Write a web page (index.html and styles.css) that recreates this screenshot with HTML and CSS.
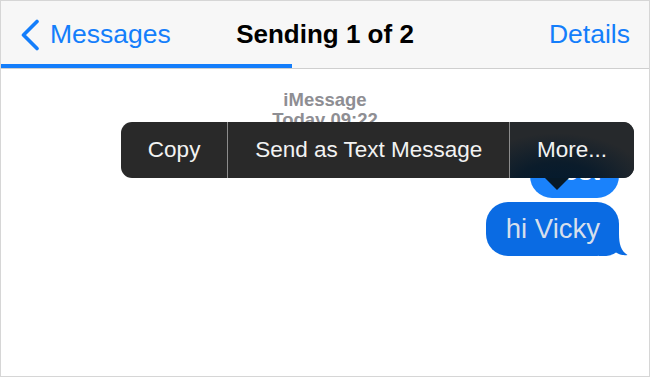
FILE: index.html
```html
<!DOCTYPE html>
<html>
<head>
<meta charset="utf-8">
<link rel="stylesheet" href="styles.css">
</head>
<body>
<div class="screen">
  <header class="navbar">
    <a class="back">
      <svg class="chevron" width="20" height="32" viewBox="0 0 20 32"><polyline points="17,2.5 3.5,16 17,29.5" fill="none" stroke="#147efb" stroke-width="3.6" stroke-linecap="round" stroke-linejoin="round"/></svg>
      <span>Messages</span>
    </a>
    <div class="title">Sending 1 of 2</div>
    <a class="details">Details</a>
  </header>
  <div class="progress"><div class="progress-fill"></div></div>
  <main class="thread">
    <div class="meta">iMessage<br>Today 09:22</div>
    <div class="bubble bubble-test">Test</div>
    <div class="bubble bubble-main">hi Vicky
      <svg class="tail" width="29" height="22" viewBox="0 0 29 22"><path d="M0,0 H20 C20,10 22,17 28.5,21 C24,21.6 20,20.6 17,18.6 C14,21 10,22 4,22 H0 Z" fill="#0a6be3"/></svg>
    </div>
    <div class="menu">
      <div class="menu-item">Copy</div>
      <div class="menu-item">Send as Text Message</div>
      <div class="menu-item menu-more">More...</div>
      <div class="menu-arrow"></div>
    </div>
  </main>
</div>
</body>
</html>
```
FILE: styles.css
```css
html, body {
  margin: 0;
  padding: 0;
  background: #fff;
}
.screen {
  width: 650px;
  height: 377px;
  box-sizing: border-box;
  border: 1px solid #d6d6d6;
  position: relative;
  overflow: hidden;
  background: #fff;
  font-family: "Liberation Sans", Arial, sans-serif;
}
.navbar {
  height: 63px;
  box-sizing: border-box;
  padding: 4px 19px 0 19px;
  display: grid;
  grid-template-columns: 1fr auto 1fr;
  align-items: center;
  background: #f7f7f7;
  font-size: 26.5px;
}
.back {
  display: flex;
  align-items: center;
  color: #147efb;
}
.chevron {
  margin-right: 10px;
  display: block;
}
.title {
  font-weight: bold;
  color: #000;
  font-size: 26px;
}
.details {
  justify-self: end;
  color: #147efb;
}
.progress {
  height: 4px;
  background: #f7f7f7;
  border-bottom: 1px solid #cfcfcf;
}
.progress-fill {
  width: 291px;
  height: 100%;
  background: #147efb;
}
.thread {
  display: flex;
  flex-direction: column;
  padding-top: 21px;
}
.meta {
  text-align: center;
  color: #8e8e93;
  font-weight: bold;
  font-size: 18.5px;
  line-height: 20px;
}
.bubble {
  align-self: flex-end;
  margin-right: 30px;
  height: 54px;
  box-sizing: border-box;
  padding: 0 19px 0 20px;
  line-height: 54px;
  font-size: 27.5px;
  border-radius: 22px;
  position: relative;
}
.bubble-test {
  margin-top: 14px;
  background: #1a82fb;
  color: #fff;
}
.bubble-main {
  margin-top: 4px;
  background: #0a6be3;
  color: #d6dfec;
}
.tail {
  position: absolute;
  right: -9px;
  bottom: 0;
  display: block;
}
.menu {
  position: absolute;
  left: 120px;
  top: 121px;
  width: 513px;
  height: 56px;
  display: flex;
  background: #292929;
  border-radius: 11px;
  color: #f2f2f2;
  font-size: 22.5px;
  white-space: nowrap;
}
.menu-item {
  flex: 1 0 auto;
  display: flex;
  align-items: center;
  justify-content: center;
  padding: 0 26px;
}
.menu-item + .menu-item {
  border-left: 1px solid #8c8c8c;
}
.menu-more {
  border-radius: 0 11px 11px 0;
  background: radial-gradient(ellipse 75% 95% at 38% 115%, #031a2e 0%, #0b1c2b 45%, #26292c 100%);
}
.menu-arrow {
  position: absolute;
  top: 100%;
  left: 424px;
  width: 0;
  height: 0;
  border-left: 12px solid transparent;
  border-right: 12px solid transparent;
  border-top: 12px solid #071927;
}
```
